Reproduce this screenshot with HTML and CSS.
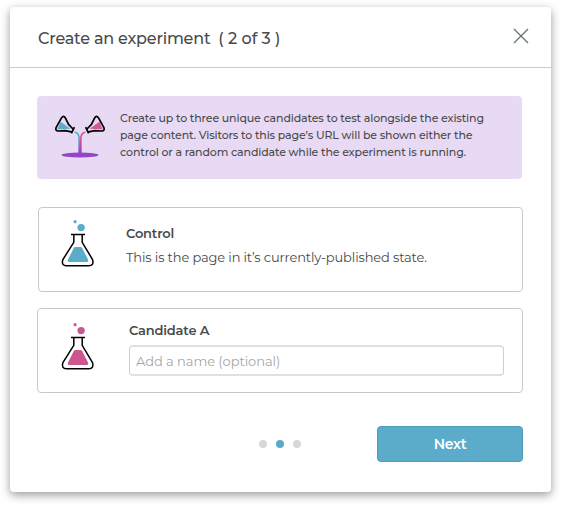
FILE: index.html
```html
<!DOCTYPE html>
<html lang="en">
<head>
    <meta charset="UTF-8">
    <meta name="viewport" content="width=device-width, initial-scale=1.0">
    <title>Create an experiment</title>
    <link rel="stylesheet" href="styles.css">
</head>
<body>
    <div class="modal">
        <!-- Header -->
        <div class="modal-header">
            <h1 class="modal-title"><span class="title-text">Create an experiment</span><span class="title-step">( 2 of 3 )</span></h1>
            <button class="close-btn" aria-label="Close">
                <svg width="16" height="16" viewBox="0 0 16 16" fill="none" stroke="#6b7777" stroke-width="1.4">
                    <path d="M1 1L15 15M15 1L1 15"/>
                </svg>
            </button>
        </div>

        <div class="modal-body">
            <!-- Intro -->
            <div class="intro">
                <svg class="intro-icon" width="52" height="46" viewBox="54 113 52 46" fill="none">
                    <defs>
                        <linearGradient id="blue-stream" gradientUnits="userSpaceOnUse" x1="0" y1="132" x2="0" y2="153">
                            <stop offset="0.3" stop-color="#5babca"/>
                            <stop offset="1" stop-color="#9145c8"/>
                        </linearGradient>
                        <linearGradient id="pink-stream" gradientUnits="userSpaceOnUse" x1="0" y1="132" x2="0" y2="153">
                            <stop offset="0.3" stop-color="#d65594"/>
                            <stop offset="1" stop-color="#9145c8"/>
                        </linearGradient>
                    </defs>
                    <ellipse cx="80" cy="155" rx="18.4" ry="2.6" fill="#9145c8"/>
                    <path d="M74.7 132C77.5 132.6 79.2 135 79.2 139V154" stroke="url(#blue-stream)" stroke-width="1.7"/>
                    <path d="M85.3 132C82.5 132.6 80.8 135 80.8 139V154" stroke="url(#pink-stream)" stroke-width="1.7"/>
                    <path d="M60.6 121.8L57.4 129.2L70.4 128.8Z" fill="#5babca"/>
                    <path d="M73 129L68.6 124.4L65.2 117.7Q63.6 115 61.6 117.7L56 127.8Q55.2 130.6 58 131L65.2 130.6L71.4 131.9M74.4 127.2L71.4 133.4" stroke="#000" stroke-width="1.7"/>
                    <path d="M99.4 121.8L102.6 129.2L89.6 128.8Z" fill="#d65594"/>
                    <path d="M87 129L91.4 124.4L94.8 117.7Q96.4 115 98.4 117.7L104 127.8Q104.8 130.6 102 131L94.8 130.6L88.6 131.9M85.6 127.2L88.6 133.4" stroke="#000" stroke-width="1.7"/>
                </svg>
                <p class="intro-text">
                    Create up to three unique candidates to test alongside the existing<br>
                    page content. Visitors to this page’s URL will be shown either the<br>
                    control or a random candidate while the experiment is running.
                </p>
            </div>

            <!-- Control -->
            <div class="card control">
                <svg class="flask flask-blue" width="34" height="49" viewBox="0 0 34 49">
                    <circle cx="14.1" cy="2.7" r="1.6"/>
                    <circle cx="20.1" cy="8.6" r="3.7"/>
                    <path d="M14.6 28H19.4Q20.6 28 21.3 29.2L27 40.5Q28 43 25.5 43H8.5Q6 43 7 40.5L12.7 29.2Q13.4 28 14.6 28Z"/>
                    <path class="glass" d="M10 15.6H24M12.8 15.6V23.3L1.9 40.5Q0 46.5 5.5 46.7H27.7Q33.4 46.5 31.5 40.5L21.2 23.3V15.6"/>
                </svg>
                <div class="card-content">
                    <h2 class="card-title">Control</h2>
                    <p class="card-text">This is the page in it’s currently-published state.</p>
                </div>
            </div>

            <!-- Candidate -->
            <div class="card candidate">
                <svg class="flask flask-pink" width="34" height="49" viewBox="0 0 34 49">
                    <circle cx="14.1" cy="2.7" r="1.6"/>
                    <circle cx="20.1" cy="8.6" r="3.7"/>
                    <path d="M14.6 28H19.4Q20.6 28 21.3 29.2L27 40.5Q28 43 25.5 43H8.5Q6 43 7 40.5L12.7 29.2Q13.4 28 14.6 28Z"/>
                    <path class="glass" d="M10 15.6H24M12.8 15.6V23.3L1.9 40.5Q0 46.5 5.5 46.7H27.7Q33.4 46.5 31.5 40.5L21.2 23.3V15.6"/>
                </svg>
                <div class="card-content">
                    <h2 class="card-title">Candidate A</h2>
                    <input class="name-input" type="text" placeholder="Add a name (optional)">
                </div>
            </div>

            <!-- Footer -->
            <div class="modal-footer">
                <div class="dots">
                    <span class="dot"></span>
                    <span class="dot active"></span>
                    <span class="dot"></span>
                </div>
                <button class="next-btn">Next</button>
            </div>
        </div>
    </div>
</body>
</html>
```
FILE: styles.css
```css
* {
    margin: 0;
    padding: 0;
    box-sizing: border-box;
}

body {
    font-family: Montserrat, Inter, sans-serif;
    background: #fff;
    color: #4a4a4a;
    height: 100vh;
    overflow: hidden;
    padding: 7px 10px 0;
}

.modal {
    width: 541px;
    height: 485px;
    background: #fff;
    border-radius: 4px;
    box-shadow: 0 3px 10px rgba(0, 0, 0, 0.4);
}

/* Header */
.modal-header {
    display: flex;
    justify-content: space-between;
    align-items: center;
    height: 61px;
    padding: 0 22px 2px 28px;
    border-bottom: 1px solid #c8cccc;
}

.modal-title {
    display: flex;
    gap: 8px;
    padding-top: 5px;
    font-size: 16px;
    font-weight: 500;
    white-space: pre;
}

.title-text {
    letter-spacing: -0.2px;
}

.close-btn {
    background: none;
    border: none;
    cursor: pointer;
}

.close-btn svg {
    display: block;
}

.modal-body {
    padding: 28px 28px 0 27px;
}

/* Intro */
.intro {
    display: flex;
    width: 485px;
    height: 83px;
    padding: 14px 0 0 17px;
    background: #e8daf4;
    border-radius: 4px;
}

.intro-icon {
    margin-top: 3px;
}

.intro-text {
    margin-left: 14px;
    font-size: 11px;
    font-weight: 500;
    line-height: 17px;
    letter-spacing: -0.14px;
    white-space: nowrap;
}

/* Cards */
.card {
    display: flex;
    height: 85px;
    border: 1px solid #c8c8c8;
    border-radius: 4px;
}

.control {
    margin: 28px 0 0 1px;
    padding: 11px 0 0 22px;
}

.candidate {
    margin-top: 16px;
    padding: 13px 18px 0 23px;
}

.flask {
    flex: none;
}

.flask-blue {
    fill: #5babca;
}

.flask-pink {
    fill: #cc5790;
}

.glass {
    fill: none;
    stroke: #000;
    stroke-width: 1.5;
}

.card-content {
    flex: 1;
    white-space: nowrap;
}

.control .card-content {
    padding: 5px 0 0 31px;
}

.candidate .card-content {
    margin-top: -1px;
    padding-left: 34px;
}

.card-title {
    font-size: 13px;
    font-weight: 600;
    line-height: 18px;
    letter-spacing: -0.18px;
}

.card-text {
    margin-top: 6px;
    font-size: 13px;
    line-height: 18px;
    letter-spacing: -0.14px;
}

.name-input {
    display: block;
    width: 375px;
    height: 31px;
    margin-top: 6px;
    padding: 1px 6px 0;
    border: 1px solid #cfcfcf;
    border-width: 2px 1px;
    border-color: #e0e0e0 #cfcfcf;
    border-radius: 4px;
    font-family: inherit;
    font-size: 13px;
    letter-spacing: -0.05px;
}

.name-input::placeholder {
    color: #a6a6a6;
}

/* Footer */
.modal-footer {
    display: flex;
    justify-content: flex-end;
    align-items: center;
    margin-top: 33px;
}

.dots {
    display: flex;
    gap: 9px;
    margin-right: 76px;
}

.dot {
    width: 8px;
    height: 8px;
    border-radius: 50%;
    background: #d8d8d8;
}

.dot.active {
    background: #5babca;
}

.next-btn {
    width: 146px;
    height: 36px;
    background: #5babca;
    color: #fff;
    border: 1px solid #4d9bb8;
    border-radius: 4px;
    font-family: inherit;
    font-size: 14px;
    font-weight: 600;
    letter-spacing: -0.3px;
    cursor: pointer;
}
```
